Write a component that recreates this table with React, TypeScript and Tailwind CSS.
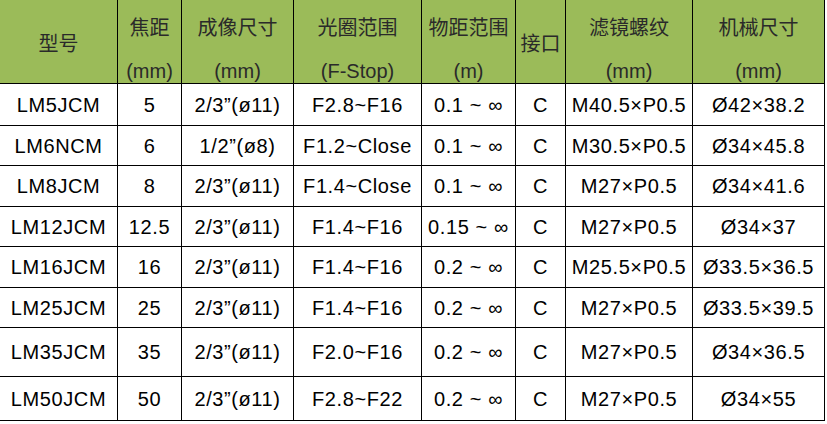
import React from 'react';

const headers: { top: string; sub?: string }[] = [
  { top: '型号' },
  { top: '焦距', sub: '(mm)' },
  { top: '成像尺寸', sub: '(mm)' },
  { top: '光圈范围', sub: '(F-Stop)' },
  { top: '物距范围', sub: '(m)' },
  { top: '接口' },
  { top: '滤镜螺纹', sub: '(mm)' },
  { top: '机械尺寸', sub: '(mm)' },
];

const rows: string[][] = [
  ['LM5JCM', '5', '2/3”(ø11)', 'F2.8~F16', '0.1 ~ ∞', 'C', 'M40.5×P0.5', 'Ø42×38.2'],
  ['LM6NCM', '6', '1/2”(ø8)', 'F1.2~Close', '0.1 ~ ∞', 'C', 'M30.5×P0.5', 'Ø34×45.8'],
  ['LM8JCM', '8', '2/3”(ø11)', 'F1.4~Close', '0.1 ~ ∞', 'C', 'M27×P0.5', 'Ø34×41.6'],
  ['LM12JCM', '12.5', '2/3”(ø11)', 'F1.4~F16', '0.15 ~ ∞', 'C', 'M27×P0.5', 'Ø34×37'],
  ['LM16JCM', '16', '2/3”(ø11)', 'F1.4~F16', '0.2 ~ ∞', 'C', 'M25.5×P0.5', 'Ø33.5×36.5'],
  ['LM25JCM', '25', '2/3”(ø11)', 'F1.4~F16', '0.2 ~ ∞', 'C', 'M27×P0.5', 'Ø33.5×39.5'],
  ['LM35JCM', '35', '2/3”(ø11)', 'F2.0~F16', '0.2 ~ ∞', 'C', 'M27×P0.5', 'Ø34×36.5'],
  ['LM50JCM', '50', '2/3”(ø11)', 'F2.8~F22', '0.2 ~ ∞', 'C', 'M27×P0.5', 'Ø34×55'],
];

export default function App() {
  return (
    <div className="w-[827px] h-[424px] bg-white overflow-hidden">
      <div className="grid w-[825px] grid-cols-[118px_64px_112px_128px_94px_50px_127px_132px] grid-rows-[84px_42px_40px_41px_40px_41px_40px_49px_44px] text-black font-['Liberation_Sans','Noto_Sans_CJK_SC',sans-serif]">
        {headers.map((h, i) =>
          h.sub ? (
            <div
              key={i}
              className="flex flex-col items-center pt-[17px] gap-[24px] bg-[#9bbb59] border-r border-b border-black text-[#2a2a2a] text-[20px] leading-[20px] whitespace-nowrap"
            >
              <span className="font-['Noto_Sans_CJK_SC',sans-serif]">{h.top}</span>
              <span>{h.sub}</span>
            </div>
          ) : (
            <div
              key={i}
              className="flex items-center justify-center pt-[2px] bg-[#9bbb59] border-r border-b border-black text-[#2a2a2a] text-[20px] leading-[20px] whitespace-nowrap font-['Noto_Sans_CJK_SC',sans-serif]"
            >
              {h.top}
            </div>
          )
        )}
        {rows.map((r, ri) =>
          r.map((c, ci) => (
            <div
              key={`${ri}-${ci}`}
              className="flex items-center justify-center border-r border-b border-black text-[20px] tracking-[0.03em] whitespace-nowrap"
            >
              {c}
            </div>
          ))
        )}
      </div>
    </div>
  );
}
